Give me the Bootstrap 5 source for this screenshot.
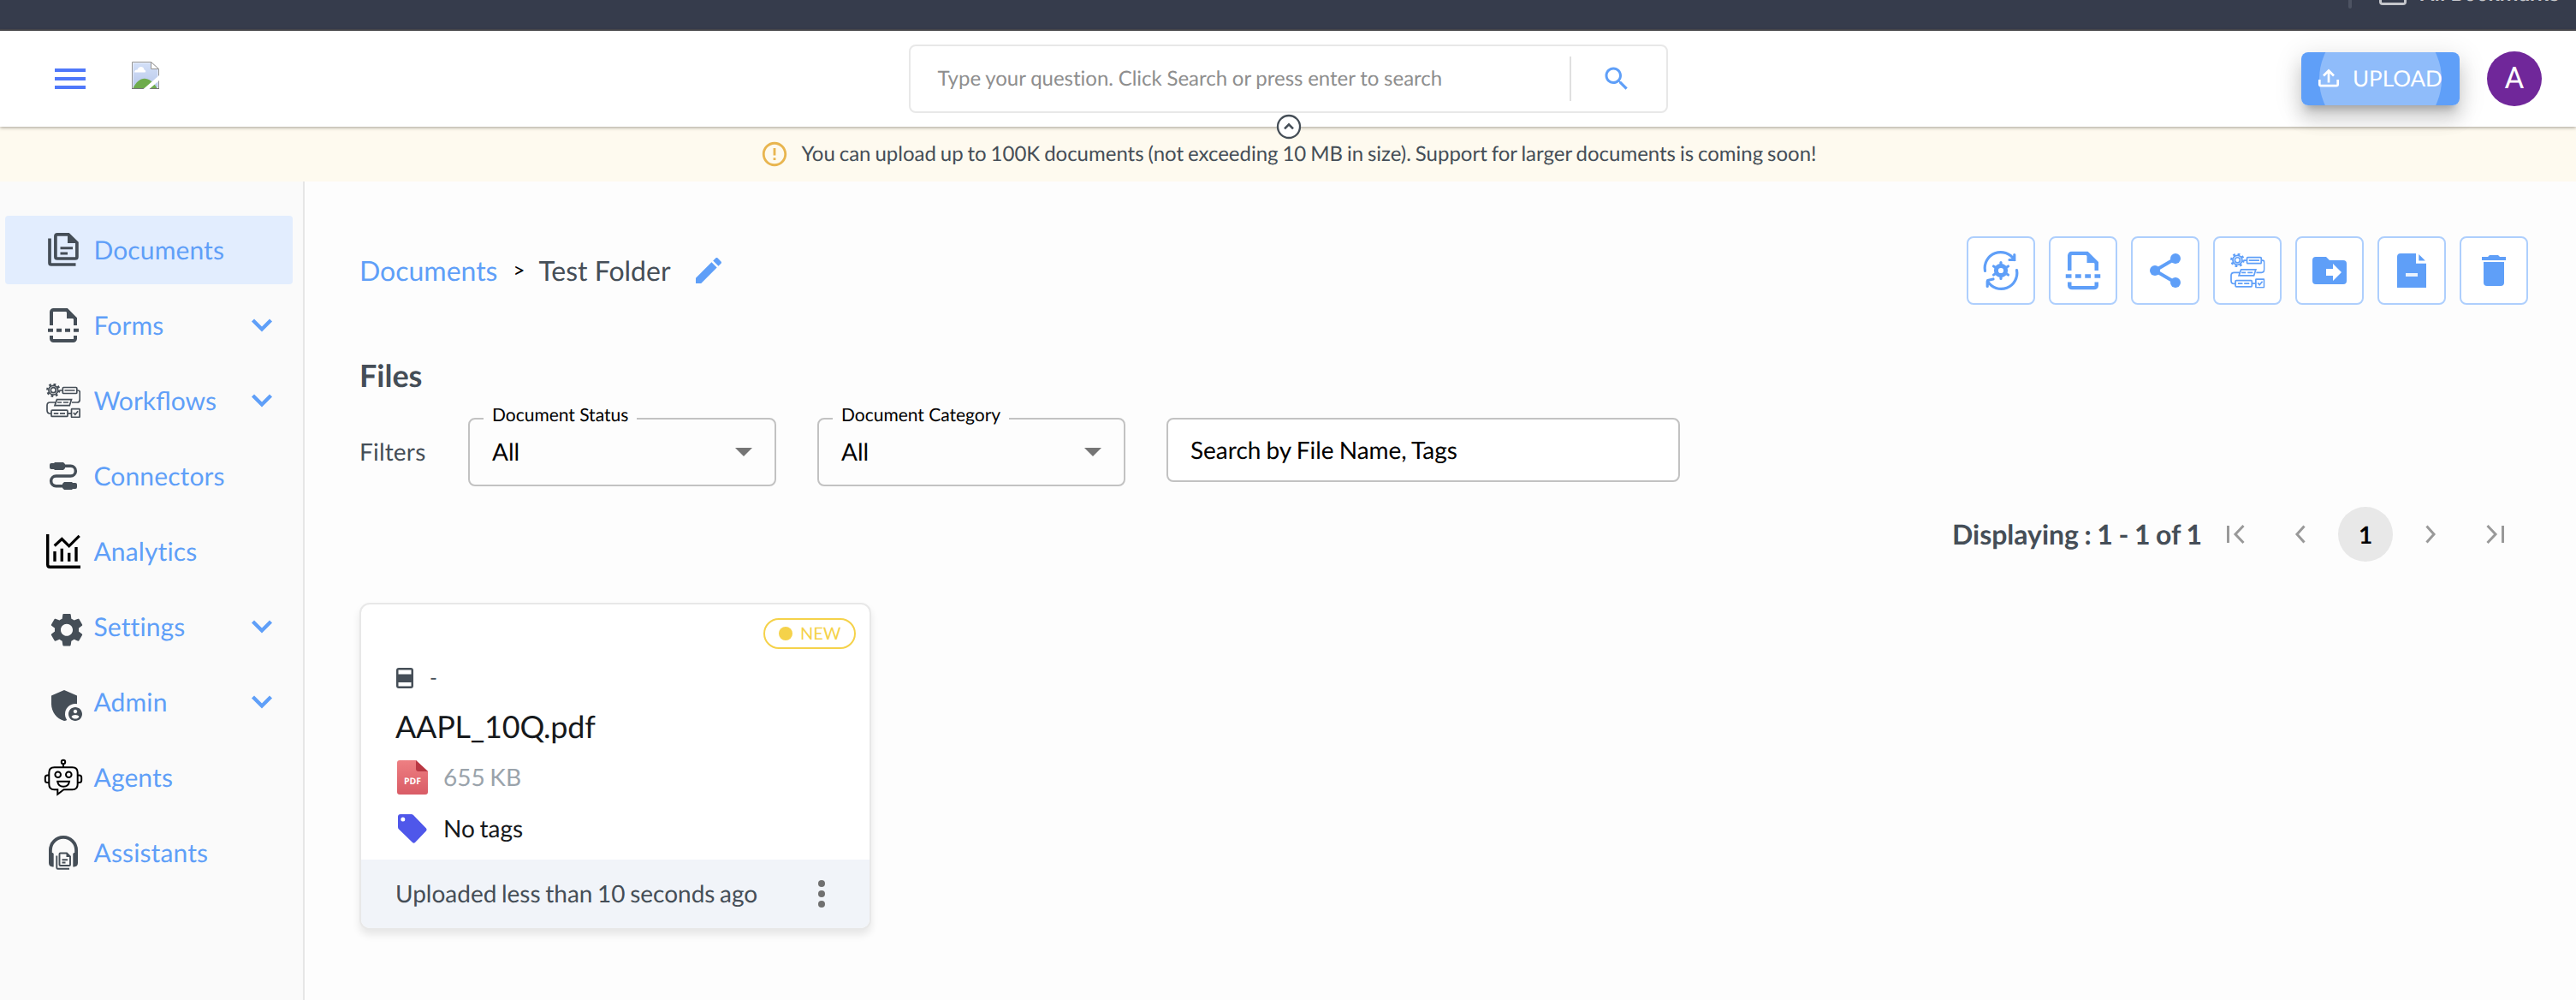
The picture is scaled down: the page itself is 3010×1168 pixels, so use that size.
<!DOCTYPE html>
<html lang="en">
<head>
<meta charset="utf-8">
<title>Documents</title>
<link href="https://cdn.jsdelivr.net/npm/bootstrap@5.3.0/dist/css/bootstrap.min.css" rel="stylesheet">
<style>
:root{--sky:#5f9ff8;--ink:#454e57}
body{font-family:Lato,"Liberation Sans",sans-serif;background:#fdfdfd;color:var(--ink);font-size:28px;line-height:1.2;height:1168px;overflow:hidden;text-rendering:geometricPrecision;letter-spacing:-.01px}
svg{display:block;overflow:visible;flex:none}
.browser-strip{height:36px;background:#363c4c;border-bottom:2px solid #47474d;overflow:hidden;color:#c5c6cb;padding-right:22px}
.strip-sep{width:4px;height:10px;background:#4d5362;border-radius:0 0 2px 2px;margin-right:32px}
.strip-folder{width:32px;height:6px;border:3px solid #c5c6cb;border-top:0;border-radius:0 0 4px 4px;margin-right:16px}
.strip-text{font:500 25px/30px Roboto,sans-serif;margin-top:-21px;width:160px;white-space:nowrap}
.topbar{height:112px;background:#fff;display:grid;grid-template-columns:1fr 887px 1fr;box-shadow:0 1px 4px rgba(50,45,30,.45);position:relative;z-index:2;padding:0 40px}
.brand{padding-left:24px;gap:54px}
.ask{height:80px;border:2px solid #e8e8e8;border-radius:8px;font-size:24px;color:#8e8e8e;padding-left:32px;word-spacing:-.4px}
.ask-go{width:113px;height:52px;border-left:2px solid #e0e0e0;padding-left:35px}
.toggle-pin{position:absolute;left:50%;bottom:-15px;margin-left:-14px;width:30px;height:30px}
.upload{width:185px;height:62px;border-radius:8px;background:var(--sky);color:#fff;font-size:26px;overflow:hidden;position:relative;padding-left:20px;gap:16px}
.upload-wrap{border-radius:8px;box-shadow:0 10px 10px -6px rgba(0,0,0,.22),0 16px 20px 2px rgba(0,0,0,.12),0 6px 30px 4px rgba(0,0,0,.1);margin-right:32px;clip-path:inset(-25px -60px -60px -60px)}
.ripple{position:absolute;width:143px;height:143px;border-radius:50%;background:rgba(255,255,255,.3);left:21px;top:-40px}
.avatar{width:64px;height:64px;border-radius:50%;background:#70279a;color:#fff;font:35px/64px Roboto,sans-serif;text-align:center}
.notice{height:64px;background:#fefaef;font-size:24px;gap:15px;word-spacing:-1.2px}
.side{width:356px;background:#fafafa;border-right:2px solid #e6e6e6;height:956px;padding:40px 12px 0 6px;gap:8px}
.side-item{height:80px;border-radius:4px;padding:0 24px 0 48px;font-size:30px;color:var(--sky);text-decoration:none;gap:15.5px;flex:none;letter-spacing:.12px}
.side-item.on{background:#e2edfe}
.content{padding:64px 56px 0 64px}
.crumbs{font-size:32px}
.tool{width:80px;height:80px;border:2px solid #aecffd;border-radius:8px;background:#fff;color:var(--sky)}
.files-h{font-size:36px;font-weight:700;line-height:44px;margin-top:60px}
.filters{margin-top:28px}
.picker{width:360px;height:80px;border:2px solid #c2c2c2;border-radius:8px;color:#000;position:relative;padding:0 26px 0 26px}
.picker-label{position:absolute;left:16px;top:-18px;padding:0 10px;background:#fdfdfd;font-size:21px;line-height:26px;white-space:nowrap}
.caret{border:10px solid transparent;border-top-color:#757575;border-bottom:0}
.finder{width:600px;height:75px;border:2px solid #c2c2c2;border-radius:8px;background:#fff;color:#000;padding:1px 0 0 26px;word-spacing:-1px}
.pager{height:64px;margin-top:24px;padding-right:28px}
.pager b{font-size:32px;word-spacing:-1.2px}
.page-no{width:64px;height:64px;border-radius:50%;background:#e8e8e8;color:#000;font:700 28px/64px Lato,sans-serif;text-align:center}
.doc{width:598px;height:382px;margin-top:48px;border:2px solid #e8e8e8;border-radius:12px;background:#fff;box-shadow:0 6px 10px rgba(0,0,0,.09);overflow:hidden;word-spacing:-1.5px}
.doc-body{height:298px;padding:0 16px 0 40px}
.doc-name{font-size:36px;line-height:44px;color:#16191c;letter-spacing:-.25px}
.tag-new{width:108px;height:36px;border:2px solid #f5d24a;border-radius:18px;color:#f5d24a;font-size:20px;margin-top:16px;gap:9px;padding-left:16px;align-self:flex-end}
.tag-new i{width:16px;height:16px;border-radius:50%;background:#f5d24a}
.doc-line{height:60px;gap:18px}
.doc-foot{height:80px;background:#f1f4f9;padding:0 52px 0 40px}
</style>
</head>
<body>
<svg width="0" height="0" class="position-absolute">
 <defs>
  <symbol id="i-form" viewBox="0 0 40 40"><g fill="none" stroke="currentColor" stroke-width="4"><path d="M6 20V4.500a2.500 2.500 0 0 1 2.500-2.500H24l10 10v8M6 32v3.500a2.500 2.500 0 0 0 2.500 2.500h23a2.500 2.500 0 0 0 2.500-2.500V32"/><path d="M2 25.700h36" stroke-dasharray="6 4"/></g><path d="M24 1l12 11H24z" fill="currentColor"/></symbol>
  <symbol id="i-flow" viewBox="0 0 40 40"><g fill="none" stroke="currentColor" stroke-width="1.700"><circle cx="8.300" cy="7.700" r="5.400"/><circle cx="8.300" cy="7.700" r="3"/><circle cx="8.300" cy="7.700" r="7" stroke-width="2.400" stroke-dasharray="2.700 2.798"/><rect x="19.300" y="4.500" width="16.500" height="7" rx="1"/><path d="M15.500 8h4M36 8h1q2.300 0 2.300 2.300V18q0 4-3.300 4h-6M12.500 18.600H29.500l-2.200 7H10zM11 22H4.500Q1 22 1 25.500V31q0 4 3.500 4H6M25 34.800h4.500"/><rect x="6" y="31.200" width="19" height="7.200" rx="1"/><rect x="29.500" y="29.700" width="9.600" height="9.600" rx=".6"/><path d="M31.800 34l2 2.300 3.300-4M21.500 8h12M13 22h5M20 22h6M8.800 34.800h5.500M16 34.800h6"/></g></symbol>
 </defs>
</svg>

<div class="browser-strip d-flex justify-content-end align-items-start"><span class="strip-sep"></span><span class="strip-folder"></span><span class="strip-text">All Bookmarks</span></div>

<header class="topbar align-items-center">
 <div class="brand d-flex align-items-center">
  <svg width="36" height="24" fill="#4f78fa"><path d="M0 0h36v4H0zM0 10h36v4H0zM0 20h36v4H0z"/></svg>
  <svg width="32" height="32" viewBox="0 0 32 32" style="margin-top:-8px"><defs><linearGradient id="sky" x2="0" y2="1"><stop stop-color="#d3e0f8"/><stop offset="1" stop-color="#b9c8ea"/></linearGradient></defs><path d="M.5.500H22.500L31.500 9V31.500H.5z" fill="#fff" stroke="#949494"/><path d="M1.500 1.500H22V9h8.500v21.500h-29z" fill="url(#sky)"/><path d="M22.500.5V8.500h9z" fill="#fff" stroke="#949494"/><path d="M3 12.500c0-2.500 2-3 3.500-3 1-4 7-5 8 0 2 0 2 3 1 3z" fill="#fff"/><path d="M1.500 31C8 17 20 15 29.500 31z" fill="#6fac4c"/><path d="M0 31.500h32" stroke="#777"/><path d="M13.500 32L32 16v6L20.500 32z" fill="#fff"/></svg>
 </div>
 <div class="ask d-flex align-items-center justify-content-between"><span>Type your question. Click Search or press enter to search</span>
  <span class="ask-go d-flex align-items-center"><svg width="36" height="36" viewBox="0 0 24 24" fill="#5f9ff8"><path d="M15.500 14h-.79l-.28-.27C15.410 12.590 16 11.110 16 9.500 16 5.910 13.090 3 9.500 3S3 5.910 3 9.500 5.910 16 9.500 16c1.610 0 3.090-.59 4.230-1.570l.27.28v.79l5 4.990L20.490 19l-4.990-5zm-6 0C7.010 14 5 11.990 5 9.500S7.010 5 9.500 5 14 7.010 14 9.500 11.990 14 9.500 14z"/></svg></span></div>
 <div class="d-flex justify-content-end align-items-center">
  <div class="upload-wrap"><div class="upload d-flex align-items-center"><span class="ripple"></span>
   <svg width="24" height="22" viewBox="0 0 24 22" fill="none" stroke="#fff" stroke-width="2.700"><path d="M1.300 12v5.500q0 1.700 1.700 1.700h18q1.700 0 1.700-1.700V12M12 15.500V2M6 7.500l6-6 6 6"/></svg><span class="position-relative">UPLOAD</span></div></div>
  <div class="avatar">A</div>
 </div>
 <svg class="toggle-pin" viewBox="0 0 30 30" fill="none" stroke="#454e57"><circle cx="15" cy="15" r="13" stroke-width="2.300" fill="#fff"/><path d="M10 17.300l5-5 5 5" stroke-width="2.600"/></svg>
</header>

<div class="notice d-flex align-items-center justify-content-center">
 <svg width="34" height="34" viewBox="0 0 24 24" fill="#e8b54f"><path d="M11 15h2v2h-2zm0-8h2v6h-2zm.99-5C6.470 2 2 6.480 2 12s4.470 10 9.990 10C17.520 22 22 17.520 22 12S17.520 2 11.990 2zM12 20c-4.420 0-8-3.580-8-8s3.580-8 8-8 8 3.580 8 8-3.580 8-8 8z"/></svg>
 <span>You can upload up to 100K documents (not exceeding 10 MB in size). Support for larger documents is coming soon!</span>
</div>

<div class="d-flex">
<nav class="side d-flex flex-column flex-shrink-0">
 <a class="side-item on d-flex align-items-center"><svg width="40" height="40" viewBox="0 0 40 40" fill="none" stroke="#454e57" stroke-width="3.700"><path d="M13 1.900H26L35.900 11.500V28a2 2 0 0 1-2 2H12.900a2 2 0 0 1-2-2V3.900a2 2 0 0 1 2-2z"/><path d="M25 1l12 11H25z" fill="#454e57" stroke="none"/><path d="M16.500 17.700H31M16.500 24H25" stroke-width="3"/><path d="M4 6.500V35a2 2 0 0 0 2 2H34.500"/></svg>Documents</a>
 <a class="side-item d-flex align-items-center"><svg width="40" height="40" color="#454e57"><use href="#i-form"/></svg>Forms<svg class="ms-auto" width="24" height="16" fill="none" stroke="#5f9ff8" stroke-width="4.300"><path d="M1.500 2L12 12.500 22.500 2"/></svg></a>
 <a class="side-item d-flex align-items-center" style="letter-spacing:normal"><svg width="40" height="40" color="#454e57"><use href="#i-flow"/></svg>Workflows<svg class="ms-auto" width="24" height="16" fill="none" stroke="#5f9ff8" stroke-width="4.300"><path d="M1.500 2L12 12.500 22.500 2"/></svg></a>
 <a class="side-item d-flex align-items-center"><svg width="40" height="40" viewBox="0 0 40 40" fill="#454e57"><path d="M20 8.300h8.500a5.850 5.850 0 0 1 0 11.700h-17a5.850 5.850 0 0 0 0 11.700H20" fill="none" stroke="#454e57" stroke-width="3.500"/><path d="M4 7q0-2 2-2h3l1-1h10l2 2v5l-2 2H10l-1-1H6q-2 0-2-2zM36 30q0-2-2-2h-3l-1-1H21l-2 2v5l2 2h9l1-1h3q2 0 2-2z"/></svg>Connectors</a>
 <a class="side-item d-flex align-items-center"><svg width="40" height="40" viewBox="0 0 40 40" fill="none" stroke="#000" stroke-width="3.400"><path d="M1.700 0v35.500q0 2.800 2.800 2.800H40"/><path d="M9.700 13.500l8.600-8 8.400 8.300L38.700 1.800" stroke-width="3.200"/><path d="M10 20v11.700M18.300 16.700v15M26.700 21.700v10M35 15v16.700"/></svg>Analytics</a>
 <a class="side-item d-flex align-items-center"><svg width="40" height="40" fill="#454e57"><path transform="translate(.6 .3) scale(1.950)" d="M19.140 12.940c.04-.3.060-.61.060-.94 0-.32-.02-.64-.07-.94l2.030-1.580c.18-.14.230-.41.120-.61l-1.920-3.320c-.12-.22-.37-.29-.59-.22l-2.390.96c-.5-.38-1.030-.7-1.620-.94l-.36-2.540c-.04-.24-.24-.41-.48-.41h-3.840c-.24 0-.43.170-.47.410l-.36 2.540c-.59.240-1.130.570-1.620.940l-2.390-.96c-.22-.08-.47 0-.59.220L2.740 8.870c-.12.210-.08.470.120.610l2.030 1.580c-.05.3-.09.630-.09.940s.020.640.070.940l-2.030 1.580c-.18.140-.23.410-.12.610l1.920 3.320c.12.220.370.290.590.220l2.390-.96c.5.380 1.030.7 1.620.940l.36 2.540c.05.240.240.410.480.410h3.840c.24 0 .44-.17.470-.41l.36-2.540c.59-.24 1.130-.56 1.620-.94l2.390.96c.22.080.470 0 .590-.22l1.920-3.320c.12-.22.070-.47-.12-.61l-2.010-1.580zM12 15.600c-1.980 0-3.600-1.620-3.600-3.600s1.620-3.600 3.600-3.600 3.600 1.620 3.600 3.600-1.620 3.600-3.600 3.600z"/></svg>Settings<svg class="ms-auto" width="24" height="16" fill="none" stroke="#5f9ff8" stroke-width="4.300"><path d="M1.500 2L12 12.500 22.500 2"/></svg></a>
 <a class="side-item d-flex align-items-center"><svg width="40" height="40" fill="#454e57"><g transform="scale(2)"><path d="M17 11c.34 0 .67.040 1 .09V6.270L10.500 3 3 6.270v4.910c0 4.540 3.200 8.790 7.500 9.820.55-.13 1.080-.32 1.600-.55-.69-.98-1.100-2.170-1.100-3.450 0-3.310 2.690-6 6-6z"/><path d="M17 13c-2.210 0-4 1.790-4 4s1.790 4 4 4 4-1.790 4-4-1.790-4-4-4zm0 1.380c.62 0 1.120.51 1.120 1.120s-.51 1.120-1.120 1.120-1.120-.51-1.120-1.120.5-1.120 1.120-1.120zm0 5.370c-.93 0-1.740-.46-2.240-1.170.05-.72 1.510-1.080 2.240-1.080s2.190.36 2.240 1.080c-.5.710-1.310 1.170-2.240 1.170z"/></g></svg>Admin<svg class="ms-auto" width="24" height="16" fill="none" stroke="#5f9ff8" stroke-width="4.300"><path d="M1.500 2L12 12.500 22.500 2"/></svg></a>
 <a class="side-item d-flex align-items-center"><svg width="40" height="40" viewBox="0 0 40 40" fill="none" stroke="#000" stroke-width="2"><circle cx="20" cy="2" r="2.200"/><path d="M20 4.500v3.500M9.500 8.300h21Q36.700 8.300 36.700 14.500V28Q36.700 34.300 30.500 34.300H20.500L13.300 39.800V34.300H9.500Q3.300 34.300 3.300 28V14.500Q3.300 8.300 9.500 8.300zM2.700 17.500H1.500Q-1.200 17.500-1.200 20v3.500Q-1.200 26 1.500 26h1.200M37.300 17.500h1.200Q41.200 17.500 41.200 20v3.500Q41.200 26 38.500 26h-1.200M13.200 24.800H27Q26 30.700 20.100 30.700T13.200 24.800z"/><circle cx="13.700" cy="16.700" r="3.300"/><circle cx="26.300" cy="16.700" r="3.300"/></svg>Agents</a>
 <a class="side-item d-flex align-items-center"><svg width="40" height="40" viewBox="0 0 40 40" fill="none" stroke="#454e57"><path d="M4.900 24V17a15.100 15.100 0 0 1 30.200 0v7" stroke-width="3.800"/><path d="M3 20h4.500l1.200 1v15.500H7.500Q3 36 3 32zM37 20h-4.500l-1.200 1v15.500h1.200Q37 36 37 32z" fill="#454e57" stroke="none"/><g stroke-width="1.900"><path d="M16.500 20.500h7.500l4 4V34q0 1-1 1H16.500q-1 0-1-1V21.500q0-1 1-1zM12.300 23.500v14q0 1.300 1.300 1.300H27M18.500 28.300h6.500M18.500 31.500h4"/></g><path d="M23.500 20v5h5z" fill="#454e57" stroke="none"/></svg>Assistants</a>
</nav>

<main class="content flex-grow-1">
 <div class="d-flex align-items-center justify-content-between">
  <div class="crumbs d-flex align-items-center"><span style="color:#5f9ff8">Documents</span><span class="fs-4 text-black" style="margin:0 16px 0 18px">&gt;</span><span>Test Folder</span><svg width="40" height="40" viewBox="0 0 24 24" fill="#5f9ff8" style="margin-left:24px"><path d="M3 17.250V21h3.750L17.810 9.940l-3.750-3.750L3 17.250zM20.710 7.040c.39-.39.390-1.020 0-1.410l-2.340-2.340c-.39-.39-1.020-.39-1.410 0l-1.830 1.830 3.750 3.750 1.830-1.830z"/></svg></div>
  <div class="d-flex gap-3">
   <span class="tool"><svg width="76" height="76" viewBox="2 2 76 76" fill="none" stroke="currentColor" stroke-width="3.200" stroke-linecap="round"><path d="M21.500 40.500A18.500 18.500 0 0 1 55.500 27.500M55.800 21.500V27.500H50M58.500 39.500A18.500 18.500 0 0 1 24.500 52.500M24.200 58.500V52.500M24.500 51.500L31 50"/><circle cx="40" cy="40" r="5.600" stroke-width="5"/><path d="M40 33V30.500M40 47v2.500M46 36.500l2.500-1.500M34 43.500L31.500 45M34 36.500L31.500 35M46 43.500l2.500 1.500"/></svg></span>
   <span class="tool"><svg width="76" height="76" viewBox="2 2 76 76"><use href="#i-form" x="17.500" y="17.500" width="45" height="45"/></svg></span>
   <span class="tool"><svg width="76" height="76" viewBox="2 2 76 76" fill="currentColor"><path d="M52 26L28 40l24 14" fill="none" stroke="currentColor" stroke-width="4"/><circle cx="28" cy="40" r="6"/><circle cx="52" cy="26" r="6"/><circle cx="52" cy="54" r="6"/></svg></span>
   <span class="tool"><svg width="76" height="76" viewBox="2 2 76 76"><use href="#i-flow" x="20" y="20" width="40.500" height="40.500"/></svg></span>
   <span class="tool"><svg width="76" height="76" viewBox="2 2 76 76" fill="currentColor"><path d="M24 24h12l4 4h16a4 4 0 0 1 4 4v20a4 4 0 0 1-4 4H24a4 4 0 0 1-4-4V28a4 4 0 0 1 4-4z"/><path d="M36 38h8v-6l10 10-10 10v-6h-8z" fill="#fff"/></svg></span>
   <span class="tool"><svg width="76" height="76" viewBox="2 2 76 76" fill="currentColor"><path d="M27 20H45V31.700H57V60H23V24a4 4 0 0 1 4-4zM48.300 21l7.500 7.500h-7.500z"/><rect x="33" y="43" width="14" height="4" fill="#e9f2fe"/></svg></span>
   <span class="tool"><svg width="76" height="76" viewBox="2 2 76 76" fill="currentColor"><path d="M26 24h7l2-2h10l2 2h7v4H26zM28 30h24v24a4 4 0 0 1-4 4H32a4 4 0 0 1-4-4z"/></svg></span>
  </div>
 </div>
 <h2 class="files-h mb-0">Files</h2>
 <div class="filters d-flex align-items-center">
  <span style="width:127px;letter-spacing:.2px">Filters</span>
  <div class="picker d-flex align-items-center justify-content-between"><span class="picker-label">Document Status</span>All<span class="caret"></span></div>
  <div class="picker d-flex align-items-center justify-content-between ms-5"><span class="picker-label">Document Category</span>All<span class="caret"></span></div>
  <div class="finder d-flex align-items-center align-self-start ms-5">Search by File Name, Tags</div>
 </div>
 <div class="pager d-flex align-items-center justify-content-end"><b>Displaying : 1 - 1 of 1</b>
  <svg style="margin-left:29px" width="21" height="20" fill="none" stroke="#999" stroke-width="3"><path d="M1.500 0v20M19.500 0L10 10l9.500 10"/></svg>
  <svg style="margin-left:59px" width="12" height="20" fill="none" stroke="#999" stroke-width="3"><path d="M10.500 0.500L2 10l8.500 9.500"/></svg>
  <span class="page-no" style="margin:0 38px">1</span>
  <svg width="12" height="20" fill="none" stroke="#999" stroke-width="3"><path d="M1.500 .5L10 10l-8.500 9.500"/></svg>
  <svg style="margin-left:59px" width="21" height="20" fill="none" stroke="#999" stroke-width="3"><path d="M1.500 0L11 10l-9.500 10M19.500 0v20"/></svg>
 </div>
 <article class="doc">
  <div class="doc-body d-flex flex-column">
   <span class="tag-new d-flex align-items-center"><i></i>NEW</span>
   <div class="d-flex align-items-center" style="height:68px;gap:19px"><svg width="20" height="24" style="margin-left:1px"><rect width="20" height="24" rx="3" fill="#454e57"/><path d="M2.500 2.500h15v5h-15zM2.500 17h15v4.500h-15z" fill="#fff"/></svg><span style="font-size:24px">-</span></div>
   <div class="doc-name">AAPL_10Q.pdf</div>
   <div class="doc-line d-flex align-items-center mt-2" style="color:#9aa3ab"><svg width="36" height="40" style="margin-left:2px"><defs><linearGradient id="red" x2="0" y2="1"><stop stop-color="#ee7f82"/><stop offset="1" stop-color="#d95c66"/></linearGradient></defs><path d="M3 0H22L36 13v24a3 3 0 0 1-3 3H3a3 3 0 0 1-3-3V3a3 3 0 0 1 3-3z" fill="url(#red)"/><path d="M22 0L36 13H25a3 3 0 0 1-3-3z" fill="#b93843"/><text x="18" y="28" text-anchor="middle" font-size="10.500" font-weight="700" font-family="Open Sans" fill="#fff">PDF</text></svg>655 KB</div>
   <div class="doc-line d-flex align-items-center" style="color:#16191c"><svg width="34" height="34" style="margin-left:3px;margin-right:1px"><path d="M3 0H15.500Q17 0 18 1L33 16.500Q34.300 18 33 19.500L20 33Q18.500 34.500 17 33L1 17.500Q0 16.500 0 15V3A3 3 0 0 1 3 0z" fill="#4f57ea"/><circle cx="5.800" cy="6" r="2.500" fill="#fff"/></svg>No tags</div>
  </div>
  <div class="doc-foot d-flex align-items-center justify-content-between">Uploaded less than 10 seconds ago<svg width="8" height="32" fill="#707070"><circle cx="4" cy="4" r="4"/><circle cx="4" cy="16" r="4"/><circle cx="4" cy="28" r="4"/></svg></div>
 </article>
</main>
</div>
</body>
</html>
